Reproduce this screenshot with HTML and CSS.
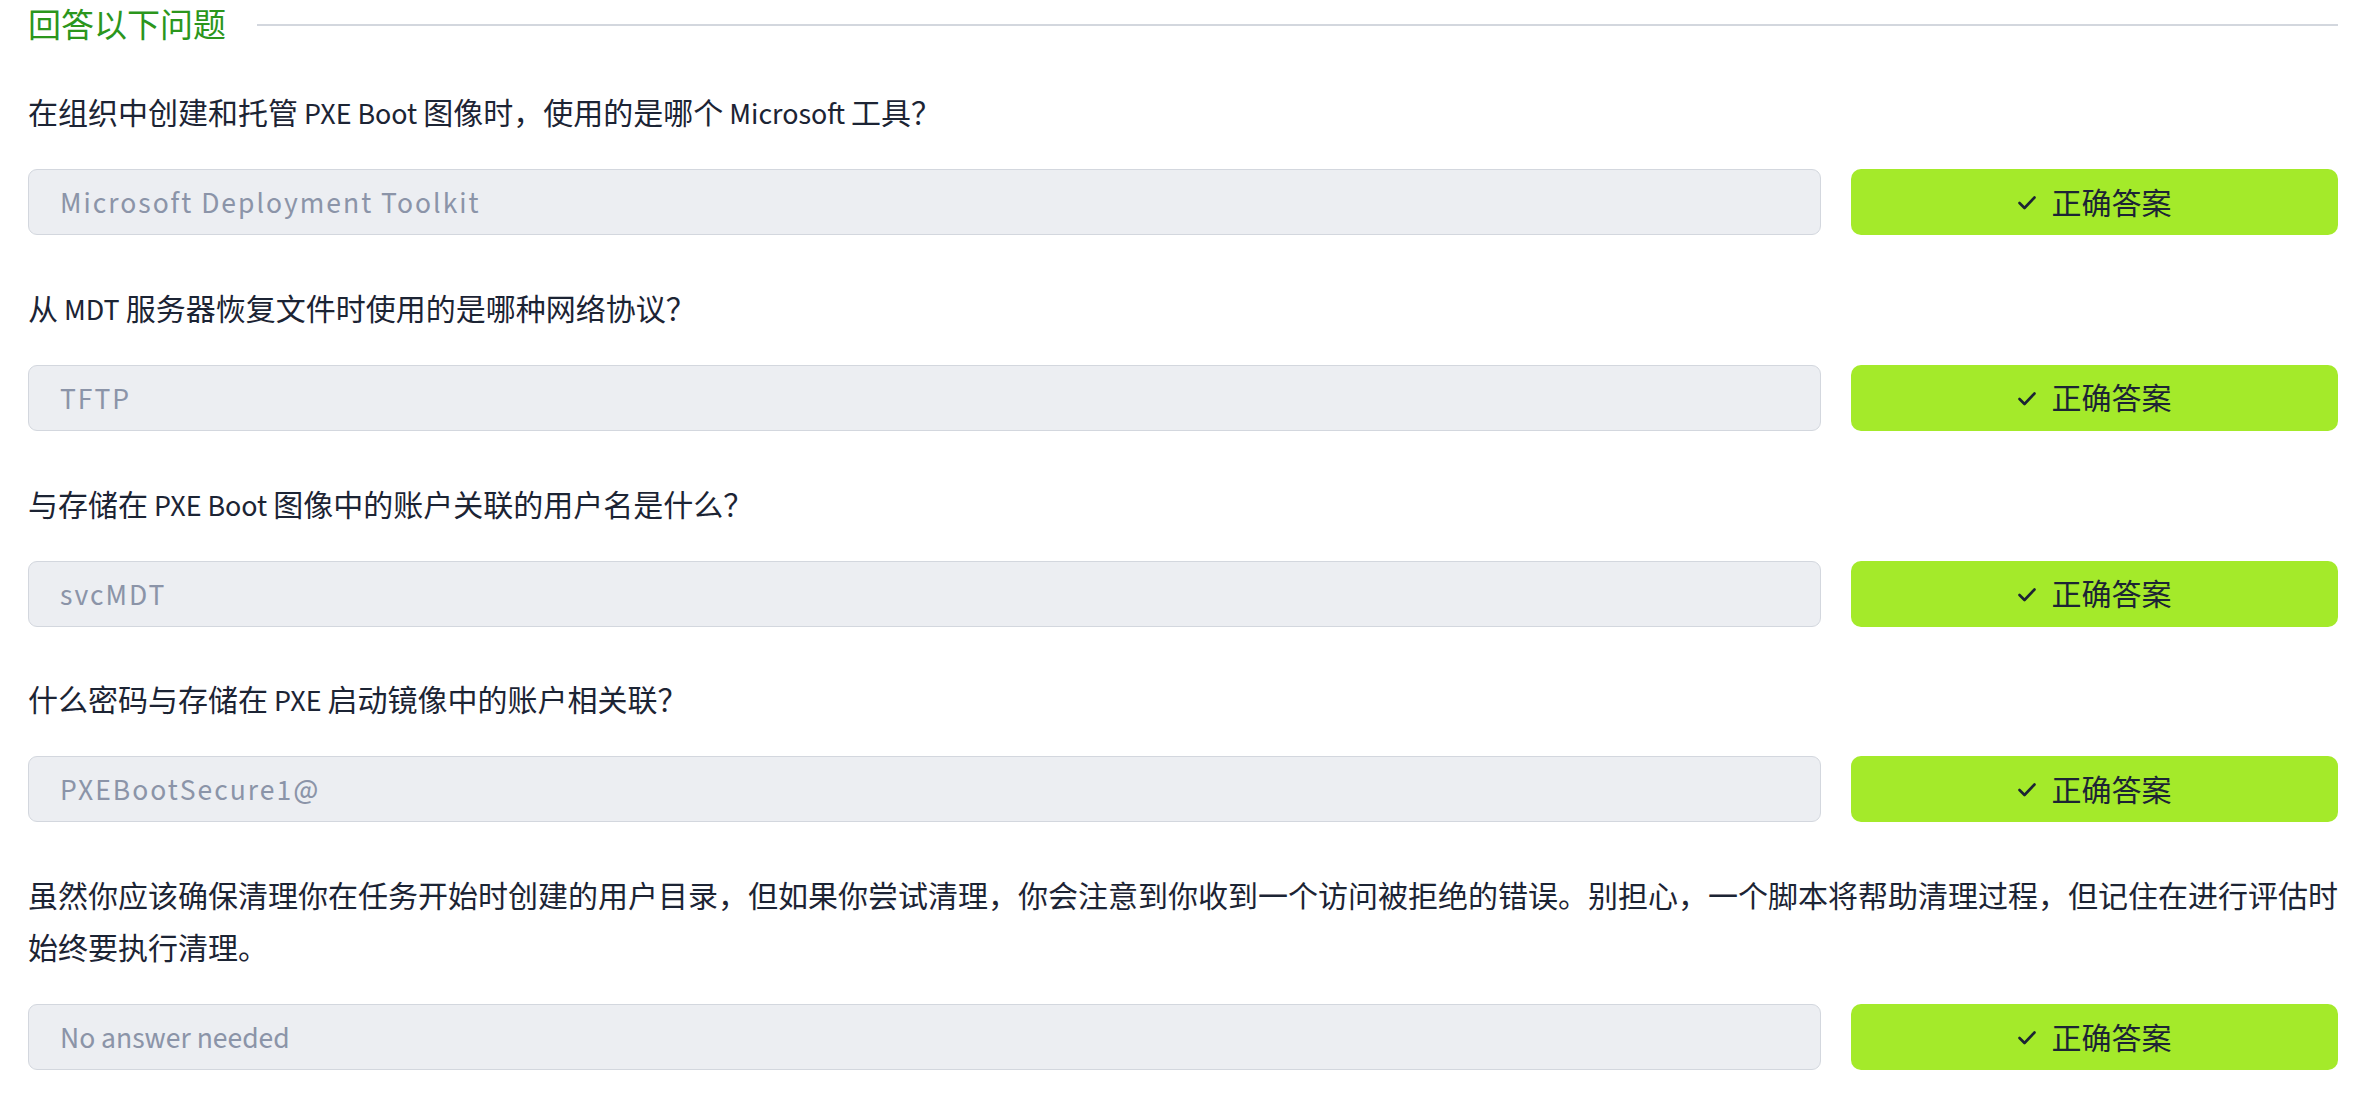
FILE: index.html
```html
<!DOCTYPE html>
<html lang="zh-CN">
<head>
<meta charset="utf-8">
<title>回答以下问题</title>
<link rel="stylesheet" href="styles.css">
</head>
<body>
<main class="page">
  <div class="section-head">
    <h2 class="section-title">回答以下问题</h2>
    <div class="section-rule"></div>
  </div>

  <div class="task">
    <p class="question">在组织中创建和托管 PXE Boot 图像时，使用的是哪个 Microsoft 工具？</p>
    <div class="answer-row">
      <div class="answer-field filled">Microsoft Deployment Toolkit</div>
      <div class="answer-btn"><svg class="check" viewBox="0 0 18 14" width="18" height="14"><polyline points="1.5,7 6.5,12 16.5,1.5" fill="none" stroke="#1c2434" stroke-width="2.6" stroke-linecap="round" stroke-linejoin="round"/></svg><span>正确答案</span></div>
    </div>
  </div>

  <div class="task">
    <p class="question">从 MDT 服务器恢复文件时使用的是哪种网络协议？</p>
    <div class="answer-row">
      <div class="answer-field filled">TFTP</div>
      <div class="answer-btn"><svg class="check" viewBox="0 0 18 14" width="18" height="14"><polyline points="1.5,7 6.5,12 16.5,1.5" fill="none" stroke="#1c2434" stroke-width="2.6" stroke-linecap="round" stroke-linejoin="round"/></svg><span>正确答案</span></div>
    </div>
  </div>

  <div class="task">
    <p class="question">与存储在 PXE Boot 图像中的账户关联的用户名是什么？</p>
    <div class="answer-row">
      <div class="answer-field filled">svcMDT</div>
      <div class="answer-btn"><svg class="check" viewBox="0 0 18 14" width="18" height="14"><polyline points="1.5,7 6.5,12 16.5,1.5" fill="none" stroke="#1c2434" stroke-width="2.6" stroke-linecap="round" stroke-linejoin="round"/></svg><span>正确答案</span></div>
    </div>
  </div>

  <div class="task">
    <p class="question">什么密码与存储在 PXE 启动镜像中的账户相关联？</p>
    <div class="answer-row">
      <div class="answer-field filled">PXEBootSecure1@</div>
      <div class="answer-btn"><svg class="check" viewBox="0 0 18 14" width="18" height="14"><polyline points="1.5,7 6.5,12 16.5,1.5" fill="none" stroke="#1c2434" stroke-width="2.6" stroke-linecap="round" stroke-linejoin="round"/></svg><span>正确答案</span></div>
    </div>
  </div>

  <div class="task">
    <p class="question">虽然你应该确保清理你在任务开始时创建的用户目录，但如果你尝试清理，你会注意到你收到一个访问被拒绝的错误。别担心，一个脚本将帮助清理过程，但记住在进行评估时始终要执行清理。</p>
    <div class="answer-row">
      <div class="answer-field placeholder">No answer needed</div>
      <div class="answer-btn"><svg class="check" viewBox="0 0 18 14" width="18" height="14"><polyline points="1.5,7 6.5,12 16.5,1.5" fill="none" stroke="#1c2434" stroke-width="2.6" stroke-linecap="round" stroke-linejoin="round"/></svg><span>正确答案</span></div>
    </div>
  </div>
</main>
</body>
</html>
```

FILE: styles.css
```css
* { box-sizing: border-box; }
html, body { margin: 0; padding: 0; background: #ffffff; }
body {
  font-family: "Source Sans 3", "Noto Sans CJK SC", "Noto Sans", sans-serif;
  color: #1c2434;
}
.page {
  width: 2310px;
  margin-left: 28px;
  padding-top: 7px;
}
.section-head {
  display: flex;
  align-items: center;
  gap: 31px;
  height: 40px;
}
.section-title {
  margin: 0;
  font-size: 33px;
  font-weight: 400;
  line-height: 40px;
  color: #2b961c;
  white-space: nowrap;
}
.section-rule {
  flex: 1;
  height: 2px;
  background: #d3d7de;
  margin-bottom: 4px;
}
.task {
  margin-top: 42px;
}
.task + .task { margin-top: 49.8px; }
.question {
  margin: 0 0 28px 0;
  font-size: 30px;
  line-height: 52px;
  color: #1c2434;
}
.answer-row {
  display: flex;
  gap: 30px;
  height: 66px;
}
.answer-field {
  flex: 1;
  background: #eceef2;
  border: 1px solid #d3d7de;
  border-radius: 9px;
  padding-left: 31px;
  padding-top: 4px;
  display: flex;
  align-items: center;
  font-size: 29.6px;
  color: #8b94a8;
}
.answer-field.filled { letter-spacing: 2px; }
.answer-btn {
  width: 487px;
  flex: none;
  background: #a4ea2a;
  border-radius: 10px;
  display: flex;
  align-items: center;
  justify-content: center;
  gap: 16px;
  font-size: 30px;
  color: #1c2434;
}
.check { display: block; margin-top: 2px; }
```
